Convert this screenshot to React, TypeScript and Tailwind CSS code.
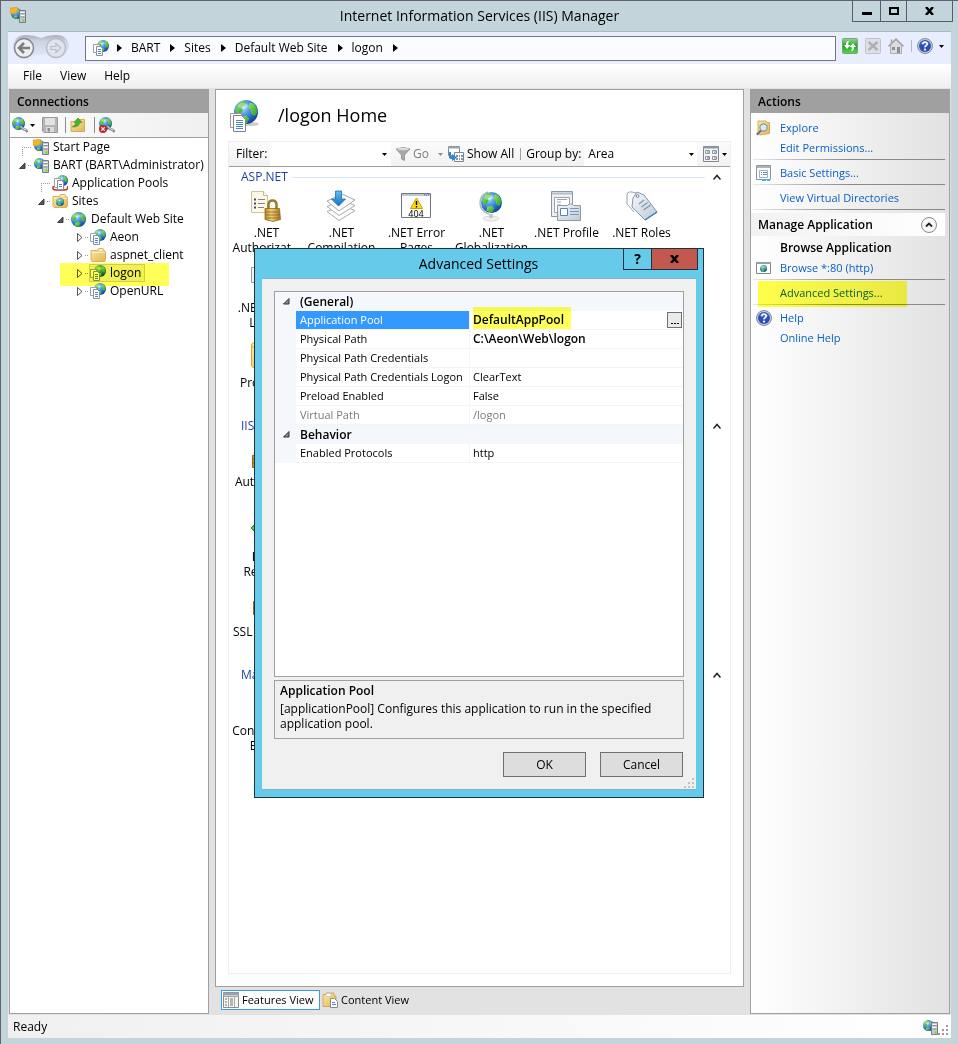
import type { ReactNode } from "react"

/* ---------- shared drawing parts ---------- */

function Defs() {
  return (
    <svg className="absolute h-0 w-0" aria-hidden="true">
      <defs>
        <radialGradient id="sea" cx="0.35" cy="0.3" r="0.75">
          <stop offset="0" stopColor="#d4effd" />
          <stop offset="0.35" stopColor="#5aa5ea" />
          <stop offset="0.75" stopColor="#2260c4" />
          <stop offset="1" stopColor="#163f96" />
        </radialGradient>
        <linearGradient id="land" x1="0" y1="0" x2="1" y2="1">
          <stop offset="0" stopColor="#9be866" />
          <stop offset="1" stopColor="#1f9a2e" />
        </linearGradient>
        <linearGradient id="gold" x1="0" y1="0" x2="1" y2="1">
          <stop offset="0" stopColor="#fbe9a9" />
          <stop offset="1" stopColor="#e2b550" />
        </linearGradient>
        <linearGradient id="brass" x1="0" y1="0" x2="1" y2="0">
          <stop offset="0" stopColor="#b98a2c" />
          <stop offset="0.4" stopColor="#f0d27a" />
          <stop offset="1" stopColor="#a47420" />
        </linearGradient>
        <linearGradient id="arrow" x1="0" y1="0" x2="0" y2="1">
          <stop offset="0" stopColor="#5fbdf0" />
          <stop offset="1" stopColor="#1673c4" />
        </linearGradient>
        <linearGradient id="leaf" x1="0" y1="0" x2="0" y2="1">
          <stop offset="0" stopColor="#8fdc8a" />
          <stop offset="0.5" stopColor="#22a028" />
          <stop offset="1" stopColor="#4fe23f" />
        </linearGradient>
        <linearGradient id="steel" x1="0" y1="0" x2="1" y2="1">
          <stop offset="0" stopColor="#f4f8fb" />
          <stop offset="1" stopColor="#bccbd8" />
        </linearGradient>
        <linearGradient id="pod" x1="0" y1="0" x2="0" y2="1">
          <stop offset="0" stopColor="#a9afbc" />
          <stop offset="0.25" stopColor="#ccd3e2" />
          <stop offset="1" stopColor="#e6ecfa" />
        </linearGradient>
      </defs>
    </svg>
  )
}

function Globe({ x, y, size }: { x: number; y: number; size: number }) {
  return (
    <g transform={`translate(${x} ${y}) scale(${size / 16})`}>
      <circle cx="8" cy="8" r="8" fill="url(#sea)" />
      <path d="M0.8 6.2Q2.2 1.8 6.6.5L8.4 1.4 7.2 3.4 5.4 4.8 5.8 7 4 9.6 2.2 9.8Z" fill="url(#land)" />
      <path d="M9.2 4.6L10.8 1.8 13 2.4Q15.6 5 15.7 8.4L13.8 10.8 11.6 9.4 11 6.6Z" fill="url(#land)" />
      <path d="M4.8 11.2L8.2 10.4 10.2 12.4 8.6 15.6Q6 15.6 4 14Z" fill="url(#land)" />
      <ellipse cx="6" cy="4" rx="3.4" ry="2" fill="#fff" opacity="0.35" />
    </g>
  )
}

function Icon({ size = 16, box = 16, children }: { size?: number; box?: number; children: ReactNode }) {
  return (
    <svg width={size} height={size} viewBox={`0 0 ${box} ${box}`} className="shrink-0" aria-hidden="true">
      {children}
    </svg>
  )
}

function AppIcon() {
  return (
    <Icon>
      <Globe x={4} y={0} size={12} />
      <path d="M0.5 4.5h5l1 1v7h-6z" fill="#fff" stroke="#9a9fa8" />
      <path d="M3.5 6.5h4l2 2v7h-6z" fill="#fff" stroke="#8a8f98" />
      <path d="M5 9.5h3M5 11.5h3M5 13.5h3" stroke="#4d83c4" />
    </Icon>
  )
}

function ServerIcon({ star = false }: { star?: boolean }) {
  return (
    <Icon>
      <Globe x={1} y={1} size={11} />
      {star && <path d="M0 1h3l2-1 3 1-1 4-4 2-3-1z" fill="#f7b52a" stroke="#d98a12" strokeWidth="0.6" />}
      <path d="M9.5 3.5h6v12h-6z" fill="#c5cbd0" stroke="#767c84" />
      <path d="M10.5 5.5h4M10.5 8.500h4" stroke="#fff" />
      <path d="M10.5 6.5h4M10.5 10h4" stroke="#7b8188" strokeWidth="0.8" />
      <circle cx="13.4" cy="13.4" r="1.2" fill="#7fdc00" />
    </Icon>
  )
}

function PoolsIcon() {
  return (
    <Icon>
      <path d="M1.500 11q-2 4 3 4h8q4 0 3-4" fill="none" stroke="#c62f26" strokeWidth="1.500" />
      <Globe x={5} y={0} size={11} />
      <path d="M2.500 3.500h6v9h-6z" fill="#fff" stroke="#9a9fa8" />
      <path d="M5.500 5.500h4l2 2v7h-6z" fill="#fff" stroke="#8a8f98" />
      <path d="M7 9.500h3M7 11.500h3" stroke="#4d83c4" />
    </Icon>
  )
}

function FolderIcon({ site = false }: { site?: boolean }) {
  return (
    <Icon>
      <path d="M1 3.500V13l1 1.500h12.500l1-1.500V4.500L14.500 3.500H14L13 1.500H8.500L7.500 3.500Z" fill="url(#gold)" stroke="#d3a448" strokeWidth="0.800" />
      <path d="M9 3h4" stroke="#fff" />
      <path d="M2 5.500H15" stroke="#fff5cf" strokeWidth="0.800" />
      {site && <Globe x={4} y={5} size={8} />}
    </Icon>
  )
}

function ConnectIcon({ broken = false }: { broken?: boolean }) {
  return (
    <Icon>
      <Globe x={0} y={0} size={13} />
      <path d="M8 9l3 3 3 1 1.500 2" fill="none" stroke="#7d858f" strokeWidth="2.400" />
      <path d="M8.500 9l3 3 3 1" fill="none" stroke="#e8ebee" strokeWidth="1" />
      {broken && (
        <>
          <circle cx="4" cy="12" r="4" fill="#c3272b" />
          <path d="M2.400 10.400l3.200 3.200M5.600 10.400l-3.200 3.200" stroke="#fff" strokeWidth="1.300" />
        </>
      )}
    </Icon>
  )
}

function SaveIcon() {
  return (
    <Icon>
      <path d="M0.500 0.500h15v15h-13.500l-1.500-1.500z" fill="#b5b5b5" stroke="#9a9a9a" />
      <path d="M3 1h10v7H3z" fill="#e2e2e2" />
      <path d="M4 10h8v5H4z" fill="#dcdcdc" />
      <path d="M5.500 11h2.500v3.500H5.500z" fill="#8c8c8c" />
    </Icon>
  )
}

function UpFolderIcon() {
  return (
    <Icon>
      <path d="M1 4.500h6l1-2h6.500v12H1z" fill="url(#gold)" stroke="#cda042" strokeWidth="0.800" />
      <path d="M2.500 9.500q3.500-1 3.500-4H4L8 1l4 4.500H9.500q0 4.500-7 4.500z" fill="#48b52c" stroke="#2c8a1a" strokeWidth="0.600" />
    </Icon>
  )
}

function HelpIcon() {
  return (
    <Icon>
      <circle cx="8" cy="8" r="7.500" fill="#c9ced6" stroke="#858c99" />
      <circle cx="8" cy="8" r="6" fill="#2b50b4" />
      <path d="M3 6q5-5 10 0-5 1-10 0z" fill="#7f9de2" opacity="0.600" />
      <path d="M5.800 6.200q0-2.200 2.200-2.200t2.200 2q0 1-1.200 1.700T8 9.400" fill="none" stroke="#fff" strokeWidth="1.600" />
      <circle cx="8" cy="11.600" r="1.100" fill="#fff" />
    </Icon>
  )
}

function Caret({ className = "text-black" }: { className?: string }) {
  return (
    <svg width="5" height="3" viewBox="0 0 5 3" className={`shrink-0 ${className}`} aria-hidden="true">
      <path d="M0 0h5L2.500 3z" fill="currentColor" />
    </svg>
  )
}

function Crumb() {
  return (
    <svg width="5" height="8" viewBox="0 0 5 8" className="shrink-0" aria-hidden="true">
      <path d="M0 0l5 4-5 4z" />
    </svg>
  )
}

function Grip({ color }: { color: string }) {
  return (
    <svg width="10" height="10" viewBox="0 0 10 10" className="shrink-0" fill={color} aria-hidden="true">
      <path d="M8 0h2v2H8zM4 4h2v2H4zM8 4h2v2H8zM0 8h2v2H0zM4 8h2v2H4zM8 8h2v2H8z" />
    </svg>
  )
}

/* ---------- feature icons, 32px ---------- */

function Padlock() {
  return (
    <g>
      <path d="M17.500 20v-5q0-4.500 4-4.500t4 4.500v5" fill="none" stroke="#9b7a34" strokeWidth="2.600" />
      <path d="M14 18.500h14.500l1 11-7.500 2-8-2z" fill="url(#brass)" stroke="#93681a" strokeWidth="0.800" />
      <path d="M14.500 22h14M14.500 25h14M14.500 28h14" stroke="#8f671d" strokeWidth="0.800" />
    </g>
  )
}

const featureIcons: Record<string, ReactNode> = {
  authorization: (
    <>
      <path d="M0.500 1.500h12l4 4v17h-16z" fill="#fbf8e4" stroke="#cdc5a2" />
      <path d="M12.500 1.500v4h4" fill="#fff" stroke="#c2b88c" />
      <path d="M7 9.500h7M7 13.500h7M7 17.500h6" stroke="#857e98" />
      <path d="M3 8.500h2v2H3zM3 12.500h2v2H3zM3 16.500h2v2H3z" fill="#4b4560" />
      <Padlock />
    </>
  ),
  compilation: (
    <>
      <path d="M1 21.500l15-6 13 5-16 10z" fill="#fff" stroke="#a7a9ac" />
      <path d="M1 16.500l15-6 13 5-16 10z" fill="#fff" stroke="#a7a9ac" />
      <path d="M1 11l15-7 13 6-16 11z" fill="#fafafa" stroke="#a7a9ac" />
      <path d="M9.500 1h6v8h4l-7 7-7-7h4z" fill="url(#arrow)" stroke="#1e6fae" strokeWidth="0.800" />
    </>
  ),
  error: (
    <>
      <path d="M0.500 3.500h29v24h-29z" fill="#fcfcfc" stroke="#6f7680" />
      <path d="M1 4h28v2H1z" fill="#bac7d8" />
      <path d="M23 5h1M25 5h1M27 5h1" stroke="#3d5a80" />
      <path d="M15.500 8l6 10.500h-12z" fill="#ffd91c" stroke="#d09c00" strokeLinejoin="round" />
      <path d="M15.500 11v4M15.500 16v1.500" stroke="#000" strokeWidth="1.400" />
      <text x="15" y="27" fontSize="9" textAnchor="middle" fill="#000">404</text>
    </>
  ),
  globalization: (
    <>
      <ellipse cx="15" cy="28.500" rx="8" ry="2.500" fill="#f0f0f0" stroke="#c4c4c4" strokeWidth="0.600" />
      <path d="M13 24h4v4h-4z" fill="#c8c8c8" />
      <path d="M12 2Q4 5 4 13t9 11" fill="none" stroke="#b3b7bb" strokeWidth="1.500" />
      <Globe x={5} y={2} size={21} />
    </>
  ),
  profile: (
    <>
      <path d="M0.500 1.500h21v25h-21z" fill="#edf1f4" stroke="#8d959d" />
      <path d="M1 3.500h20" stroke="#b5bdc5" strokeWidth="2" />
      <path d="M3.500 7.500h15v15h-15zM6 9.500h10M6 12h4M6 15h4" fill="#fff" stroke="#9aa3ac" />
      <path d="M6.500 15.500h10l1.500-1.500h3l1.500 1.500h7v15h-23z" fill="url(#steel)" stroke="#8d99a6" />
      <path d="M9.500 18.500h7v7h-7z" fill="#fff" stroke="#5c81b0" />
      <path d="M19 18.500h9M19 21.500h9M19 24.500h9" stroke="#7d97b5" />
    </>
  ),
  roles: (
    <>
      <path d="M10 3Q1 0 1 5v9l7 8" fill="none" stroke="#9aa3ab" />
      <path d="M7 8l4-6 7 3 13 17-12 8L6 17z" fill="url(#steel)" stroke="#8195a6" />
      <circle cx="11.500" cy="6" r="1.400" fill="#fff" stroke="#75818c" />
      <path d="M13 14l5-4M15.500 17l6-4.500M17.500 20l7-5" stroke="#8192b0" strokeWidth="1.200" />
      <path d="M31 22l-12 8" stroke="#3c7eb5" strokeWidth="1.500" />
    </>
  ),
  trust: (
    <path d="M0.500 2.500h19v15h-19zM4 5h14v15H4z" fill="#f3f3f3" stroke="#9a9a9a" />
  ),
  providers: (
    <>
      <path d="M0.500 5v20q0 4 11 4t11-4V5z" fill="url(#gold)" stroke="#e0a52c" />
      <ellipse cx="11.500" cy="5" rx="11" ry="4" fill="#ffe9a6" stroke="#e0a52c" />
    </>
  ),
  authentication: (
    <>
      <path d="M4 17v-3q0-4 4-4t4 4v3" fill="none" stroke="#9b7a34" strokeWidth="2.400" />
      <path d="M1.500 16.500h14v12h-14z" fill="url(#brass)" stroke="#93681a" />
      <path d="M1 20h15M1 24h15" stroke="#8f671d" />
    </>
  ),
  redirect: <path d="M0 14l10-10v6h18v8h-18v6z" fill="#58c43b" stroke="#2f8a1e" />,
  ssl: (
    <>
      <path d="M2.500 12.500h20v13h-20z" fill="url(#brass)" stroke="#93681a" />
      <path d="M3 16h20M3 20h20" stroke="#8f671d" />
    </>
  ),
  editor: <path d="M8.500 2.500h18v26h-18zM12 8h10M12 12h10" fill="#fff" stroke="#8d959d" />,
}

/* ---------- title, address and menu bars ---------- */

function TitleBar() {
  return (
    <header className="flex h-[30px] items-start">
      <div className="flex w-[99px] pl-0.5 pt-[6px]">
        <ServerIcon star />
      </div>
      <h1 className="flex-1 pt-1 text-center text-[14px] leading-[22px]">
        Internet Information Services (IIS) Manager
      </h1>
      <div className="-mr-0.5 flex h-[21px] border border-t-0 border-[#5b5a6b]">
        <button aria-label="Minimize" className="flex w-[27px] items-center justify-center">
          <svg width="10" height="3" className="mt-1"><path d="M0 0h10v3H0z" /></svg>
        </button>
        <button aria-label="Maximize" className="flex w-[27px] items-center justify-center border-x border-[#5b5a6b]">
          <svg width="10" height="8" fill="none" stroke="#000" strokeWidth="2"><path d="M1 1h8v6H1z" /></svg>
        </button>
        <button aria-label="Close" className="flex w-[45px] items-center justify-center">
          <svg width="9" height="8" stroke="#000" strokeWidth="2.500"><path d="M1 0l7 8M8 0L1 8" /></svg>
        </button>
      </div>
    </header>
  )
}

function AddressBar() {
  return (
    <nav className="flex h-[33px] items-center border-t border-[#a9b9c4] bg-[#e8eefd] pr-[7px]" aria-label="Address">
      <svg width="58" height="28" viewBox="0 0 58 28" className="ml-1 shrink-0" aria-hidden="true">
        <path d="M1 13Q2 1 14 1q8 0 15 3 7-3 15-3 12 0 13 12-4 12-13 12-6 0-9-4h-12q-3 5-9 5Q3 26 1 13z" fill="url(#pod)" />
        <circle cx="12" cy="14" r="9.500" fill="#eceef2" stroke="#868686" strokeWidth="1.500" />
        <path d="M18 14H8M12 9l-5 5 5 5" fill="none" stroke="#7c7c7c" strokeWidth="2.600" />
        <circle cx="44" cy="14" r="9.500" fill="#dfe4ef" stroke="#b7bcc7" strokeWidth="1.500" />
        <path d="M39 12.500h5v-3l5 4.500-5 4.500v-3h-5z" fill="none" stroke="#b7bcc7" strokeWidth="1.200" />
      </svg>
      <div className="ml-[15px] flex h-[25px] flex-1 items-center border border-[#75777d] bg-[#fafcff] pl-[7px]">
        <AppIcon />
        <ol className="ml-2 flex items-center gap-[10px]">
          {["BART", "Sites", "Default Web Site", "logon"].map((name) => (
            <li key={name} className="flex items-center gap-[9px]">
              <Crumb />
              <a href="#">{name}</a>
            </li>
          ))}
          <li><Crumb /></li>
        </ol>
      </div>
      <div className="mb-1 ml-[6px] flex items-center gap-[7px]">
        <button aria-label="Refresh">
          <Icon>
            <rect x="0.500" y="0.500" width="15" height="15" rx="1" fill="url(#leaf)" stroke="#8a9a8a" />
            <path d="M7 3Q3.500 3 4 7H2l3 4 3.500-4H6.500Q5.500 5 7 3zM9 13q3.500 0 3-4h2l-3-4-3.500 4h2q1 2-.5 4z" fill="#fff" />
          </Icon>
        </button>
        <button aria-label="Stop">
          <Icon>
            <rect x="0.500" y="0.500" width="15" height="15" rx="1" fill="#dcdfe5" stroke="#c0c3c9" />
            <path d="M3.500 4l9 8M12.500 4l-9 8" stroke="#adafb4" strokeWidth="2.400" />
          </Icon>
        </button>
        <button aria-label="Home">
          <Icon>
            <path d="M2.500 7v8.500h11V7L8 2z" fill="#dcdcdc" stroke="#b0b0b0" />
            <path d="M0.500 8.500L8 1l7.500 7.500M3.500 5V1.500" fill="none" stroke="#a9a9a9" strokeWidth="1.600" />
            <path d="M9 9h3v6H9zM4 9h3v3H4z" fill="#8f8f8f" />
          </Icon>
        </button>
        <span className="h-3 w-px bg-[#b4b8c2]" />
        <button aria-label="Help" className="-ml-0.5 flex items-center gap-[6px]">
          <HelpIcon />
          <Caret />
        </button>
      </div>
    </nav>
  )
}

function MenuBar() {
  return (
    <div className="flex h-6 items-center gap-[18px] bg-linear-to-b from-white to-[#efefef] px-[15px]">
      <button>File</button>
      <button>View</button>
      <button>Help</button>
    </div>
  )
}

/* ---------- connections tree ---------- */

type Node = {
  label: string
  indent: string
  state: "open" | "closed" | "leaf"
  icon: ReactNode
  selected?: boolean
}

const nodes: Node[] = [
  { label: "Start Page", indent: "pl-[9px]", state: "leaf", icon: <ServerIcon star /> },
  { label: "BART (BART\\Administrator)", indent: "pl-[9px]", state: "open", icon: <ServerIcon /> },
  { label: "Application Pools", indent: "pl-[28px]", state: "leaf", icon: <PoolsIcon /> },
  { label: "Sites", indent: "pl-[28px]", state: "open", icon: <FolderIcon site /> },
  { label: "Default Web Site", indent: "pl-[47px]", state: "open", icon: <Icon><Globe x={0} y={1} size={15} /></Icon> },
  { label: "Aeon", indent: "pl-[66px]", state: "closed", icon: <AppIcon /> },
  { label: "aspnet_client", indent: "pl-[66px]", state: "closed", icon: <FolderIcon /> },
  { label: "logon", indent: "pl-[66px]", state: "closed", icon: <AppIcon />, selected: true },
  { label: "OpenURL", indent: "pl-[66px]", state: "closed", icon: <AppIcon /> },
]

function Twisty({ state }: { state: Node["state"] }) {
  return (
    <svg width="13" height="18" viewBox="0 0 13 18" className="shrink-0" aria-hidden="true">
      {state === "open" && <path d="M6 7v5.500H0.500z" fill="#595959" stroke="#262626" strokeWidth="0.800" />}
      {state === "closed" && <path d="M1.500 5.500l4.500 4-4.500 4z" fill="#fff" stroke="#555" />}
      <path d={state === "leaf" ? "M3 9.500h10" : "M9 9.500h4"} stroke="#9a9a9a" strokeDasharray="1 1" />
      {state === "leaf" && <path d="M3.500 9v9" stroke="#9a9a9a" strokeDasharray="1 1" />}
    </svg>
  )
}

function Connections() {
  return (
    <aside className="flex w-[200px] shrink-0 flex-col border border-t-0 border-[#a0a0a0] bg-white">
      <h2 className="h-6 bg-[#a0a0a0] pl-[7px] font-semibold leading-[25px]">Connections</h2>
      <div className="flex h-[25px] items-center border-b border-[#a0a0a0] bg-linear-to-r from-[#fcfcfc] to-[#f0f0f0] pl-0.5">
        <button aria-label="Create connection" className="flex items-center gap-0.5">
          <ConnectIcon />
          <Caret />
        </button>
        <button aria-label="Save" className="ml-[7px]"><SaveIcon /></button>
        <span className="ml-[7px] h-4 w-px bg-[#8c8c8c]" />
        <button aria-label="Up" className="ml-1"><UpFolderIcon /></button>
        <span className="ml-2 h-4 w-px bg-[#8c8c8c]" />
        <button aria-label="Delete connection" className="ml-1"><ConnectIcon broken /></button>
      </div>
      <ul>
        {nodes.map((node) => (
          <li key={node.label} className={`relative flex h-[18px] items-center whitespace-nowrap ${node.indent}`}>
            <Twisty state={node.state} />
            <span className={`flex h-[18px] items-center gap-1 pl-px pr-1 ${node.selected ? "bg-[#f0f0f0] outline outline-[#d0d0d0] -outline-offset-1" : ""}`}>
              {node.icon}
              {node.label}
            </span>
            {node.selected && (
              <mark className="absolute left-[50px] top-[-1px] h-[23px] w-[109px] bg-[#ffff57] mix-blend-multiply" />
            )}
          </li>
        ))}
      </ul>
    </aside>
  )
}

/* ---------- features view ---------- */

type Feature = { icon: string; label: string }

const groups: { title: string; rows: Feature[][] }[] = [
  {
    title: "ASP.NET",
    rows: [
      [
        { icon: "authorization", label: ".NET\nAuthorizat..." },
        { icon: "compilation", label: ".NET\nCompilation" },
        { icon: "error", label: ".NET Error\nPages" },
        { icon: "globalization", label: ".NET\nGlobalization" },
        { icon: "profile", label: ".NET Profile" },
        { icon: "roles", label: ".NET Roles" },
      ],
      [{ icon: "trust", label: ".NET Trust\nLevels" }],
      [{ icon: "providers", label: "Providers" }],
    ],
  },
  {
    title: "IIS",
    rows: [
      [{ icon: "authentication", label: "Authentic..." }],
      [{ icon: "redirect", label: "HTTP\nRedirect" }],
      [{ icon: "ssl", label: "SSL Settings" }],
    ],
  },
  {
    title: "Management",
    rows: [[{ icon: "editor", label: "Configurat...\nEditor" }]],
  },
]

function FilterBar() {
  return (
    <div className="flex h-[25px] items-center whitespace-nowrap border-b border-[#a0a0a0] bg-linear-to-b from-[#fbfbfb] to-[#f2f2f2]">
      <label htmlFor="filter" className="w-[41px] pl-[7px]">Filter:</label>
      <div className="flex h-6 w-[121px] items-center bg-white pr-1">
        <input id="filter" type="text" className="w-full min-w-0 outline-none" />
        <Caret />
      </div>
      <button className="ml-1 flex items-center gap-0.5 text-[#7d7d7d]">
        <Icon>
          <path d="M1 3q7-3 14 0l-5.500 6v5.500L6.500 13V9z" fill="#a9a9a9" stroke="#8f8f8f" strokeWidth="0.800" />
          <ellipse cx="8" cy="3" rx="6" ry="1.200" fill="#dedede" />
        </Icon>
        Go
      </button>
      <Caret className="ml-[9px] text-[#8f8f8f]" />
      <button className="ml-[5px] flex items-center gap-[3px]">
        <Icon>
          <path d="M0.500 0.500h11v9h-11z" fill="#fff" stroke="#7d8794" />
          <path d="M0 1.500h12" stroke="#9aa4b0" strokeWidth="2" />
          <path d="M6.500 6.500h9v9h-9z" fill="#fff" stroke="#7d8794" />
          <path d="M8 10h2M11 10h1M13 10h2M8 13h2M11 13h1M13 13h2" stroke="#5c6f90" strokeWidth="1.500" />
          <path d="M1 6v5q0 2 3 2v2l5-3.500L4 8v2.500Q3 10.500 3 9V6z" fill="#2f86d0" />
        </Icon>
        Show All
      </button>
      <span className="ml-[6px] h-3 w-px bg-[#a0a0a0]" />
      <label htmlFor="group" className="ml-[5px]">Group by:</label>
      <div className="ml-[3px] flex h-6 flex-1 items-center bg-white pr-[3px]">
        <select id="group" className="w-full min-w-0 appearance-none pl-1 outline-none">
          <option>Area</option>
        </select>
        <Caret />
      </div>
      <button aria-label="View style" className="ml-[6px] mr-[3px] flex items-center gap-[3px]">
        <Icon>
          <path d="M0.500 0.500h15v15h-15z" fill="#f4f6f8" stroke="#7d8590" />
          <path d="M0 1.500h16" stroke="#8c98a8" strokeWidth="2" />
          <path d="M2.500 4.500h4v3h-4zM9.500 4.500h4v3h-4zM2.500 10.500h4v3h-4zM9.500 10.500h4v3h-4z" fill="#fff" stroke="#8b93a0" />
          <path d="M4 6h2" stroke="#41a040" />
          <path d="M11 6h2" stroke="#3c8ac4" />
          <path d="M4 12h2" stroke="#6b3cb0" />
          <path d="M11 12h2" stroke="#d1622f" />
        </Icon>
        <Caret />
      </button>
    </div>
  )
}

function Features() {
  return (
    <main className="flex min-w-0 flex-1 flex-col">
      <section className="flex flex-1 flex-col border border-[#a0a0a0] bg-white px-3 pb-3">
        <div className="flex h-[51px] items-center pl-0.5">
          <Icon size={32} box={32}>
            <ellipse cx="20" cy="24" rx="9" ry="2" fill="#000" opacity="0.200" />
            <Globe x={4} y={0} size={24} />
            <path d="M0.500 13.500h11v14h-11z" fill="#fbfbfb" stroke="#9a9a9a" />
            <path d="M3.500 15.500h8l4 4v12h-12z" fill="#fff" stroke="#858585" />
            <path d="M6 20.500h7M6 22.500h7M6 24.500h7M6 26.500h7M6 28.500h7" stroke="#4b86cd" />
          </Icon>
          <h2 className="ml-4 pb-0.5 text-lg">/logon Home</h2>
        </div>
        <div className="flex-1 border border-[#efefef]">
          <FilterBar />
          {groups.map((group) => (
            <section key={group.title} className="mb-px">
              <div className="mb-[3px] flex h-5 items-center pl-3 pr-[9px]">
                <h3 className="text-[#1f3f9f]">{group.title}</h3>
                <span className="ml-1 h-px flex-1 bg-[#d9e7f6]" />
                <button aria-label="Collapse group" className="ml-2">
                  <svg width="8" height="6" fill="none" stroke="#222" strokeWidth="1.500"><path d="M0.500 5.500L4 1.500l3.500 4" /></svg>
                </button>
              </div>
              {group.rows.map((row, i) => (
                <div key={i} className="flex h-[75px]">
                  {row.map((f) => (
                    <a href="#" key={f.label} className="flex w-[75px] flex-col items-center gap-[3px]">
                      <Icon size={32} box={32}>{featureIcons[f.icon]}</Icon>
                      <span className="whitespace-pre text-center leading-[15px]">{f.label}</span>
                    </a>
                  ))}
                </div>
              ))}
            </section>
          ))}
        </div>
      </section>
      <div className="flex h-[27px] items-center pb-px pl-[6px] text-[11px]">
        <button className="flex h-5 w-[99px] items-center gap-[3px] whitespace-nowrap border border-[#3399ff] bg-white pl-px">
          <Icon>
            <path d="M0.500 0.500h15v15h-15z" fill="#f5f5f5" stroke="#8b8b8b" />
            <path d="M0 2h16" stroke="#9aa3ad" strokeWidth="3" />
            <path d="M5.500 4v11M11.500 4v11M0.500 4.500h15" stroke="#a8a8a8" />
            <path d="M2 7h2M2 10h2M2 13h2M7 7h3M7 9h3M7 11h3M7 13h3" stroke="#6c7b5c" />
          </Icon>
          Features View
        </button>
        <button className="ml-0.5 flex items-center gap-[3px] whitespace-nowrap">
          <Icon>
            <path d="M1 2.500h3V1h8v3h2v9l-2 1.500H1z" fill="url(#gold)" stroke="#c89e44" strokeWidth="0.800" />
            <path d="M4 1.500h5v3H4z" fill="#fff" stroke="#b5b5b5" strokeWidth="0.600" />
            <path d="M8.500 6.500h4l3 3v6h-7z" fill="#fff" stroke="#8a8a8a" />
            <path d="M10 10.500h3M10 12.500h4" stroke="#4b86cd" />
          </Icon>
          Content View
        </button>
      </div>
    </main>
  )
}

/* ---------- actions ---------- */

function Action({ icon, children }: { icon?: ReactNode; children: ReactNode }) {
  return (
    <a href="#" className="flex h-5 items-center gap-2 pl-[5px] text-[11px] text-[#0a5fc4]">
      <span className="w-4">{icon}</span>
      {children}
    </a>
  )
}

function Divider() {
  return (
    <div className="ml-[2px] mr-1 h-[5px] pt-px">
      <div className="h-px bg-linear-to-r from-[#e8e8e8] to-[#8a8a8a] to-50%" />
    </div>
  )
}

function Actions() {
  return (
    <aside className="flex w-[200px] shrink-0 flex-col border border-t-0 border-[#a0a0a0] bg-linear-to-r from-white to-[#e2e2e2]">
      <h2 className="mb-[5px] h-6 bg-[#a0a0a0] pl-[7px] font-semibold leading-[25px]">Actions</h2>
      <Action
        icon={
          <Icon>
            <path d="M2 1h8l1 1.500h2.500v11L4 15l-2-1z" fill="url(#gold)" stroke="#cfa040" strokeWidth="0.800" />
            <circle cx="7.500" cy="7.500" r="3.600" fill="#d7ecf8" stroke="#8796a3" strokeWidth="1.200" />
            <path d="M5 10.500L0.800 14.800" stroke="#6d747c" strokeWidth="2" />
          </Icon>
        }
      >
        Explore
      </Action>
      <Action>Edit Permissions...</Action>
      <Divider />
      <Action
        icon={
          <Icon>
            <path d="M0.500 0.500h14v14h-14z" fill="#fafbfc" stroke="#8b95a1" />
            <path d="M1 2h13" stroke="#aab4c0" strokeWidth="2" />
            <path d="M3.500 5.500h8v7h-8z" fill="#fff" stroke="#9fb0c0" />
            <path d="M5 7.500h1M7 7.500h4M5 9.500h1M7 9.500h4" stroke="#6a88a8" />
            <path d="M6 15h4M11 15h3" stroke="#36b5ee" strokeWidth="2" />
          </Icon>
        }
      >
        Basic Settings...
      </Action>
      <Divider />
      <Action>View Virtual Directories</Action>
      <Divider />
      <div className="mb-0.5 mr-1 flex h-[23px] items-center justify-between bg-linear-to-r from-[#f2f2f2] to-white pl-[7px] pr-2">
        <h3 className="font-semibold">Manage Application</h3>
        <button aria-label="Collapse">
          <Icon>
            <circle cx="8" cy="8" r="7.500" fill="#f7f7f7" stroke="#8a8a8a" />
            <path d="M5 9.500L8 6.500l3 3" fill="none" stroke="#222" strokeWidth="1.800" />
          </Icon>
        </button>
      </div>
      <h4 className="h-5 pl-[29px] font-semibold leading-5">Browse Application</h4>
      <Action
        icon={
          <Icon>
            <path d="M0.500 2.500h14v11h-14z" fill="#fff" stroke="#7f8893" />
            <path d="M0 3h15" stroke="#8fa0b5" strokeWidth="2" />
            <Globe x={4} y={5} size={7} />
          </Icon>
        }
      >
        Browse *:80 (http)
      </Action>
      <Divider />
      <div className="relative">
        <Action>Advanced Settings...</Action>
        <mark className="absolute left-[7px] top-[-2px] h-[26px] w-[149px] bg-[#ffff4a] mix-blend-multiply" />
      </div>
      <Divider />
      <Action icon={<HelpIcon />}>Help</Action>
      <Action>Online Help</Action>
    </aside>
  )
}

/* ---------- advanced settings dialog ---------- */

const settings = [
  {
    category: "(General)",
    items: [
      { name: "Application Pool", value: "DefaultAppPool", kind: "active" },
      { name: "Physical Path", value: "C:\\Aeon\\Web\\logon", kind: "changed" },
      { name: "Physical Path Credentials", value: "", kind: "plain" },
      { name: "Physical Path Credentials Logon", value: "ClearText", kind: "plain" },
      { name: "Preload Enabled", value: "False", kind: "plain" },
      { name: "Virtual Path", value: "/logon", kind: "readonly" },
    ],
  },
  {
    category: "Behavior",
    items: [{ name: "Enabled Protocols", value: "http", kind: "plain" }],
  },
]

function PropertyGrid() {
  return (
    <div className="h-[386px] border border-[#a0a0a0] bg-white">
      <table className="w-full table-fixed border-separate border-spacing-0">
        <colgroup>
          <col className="w-[21px]" />
          <col className="w-[174px]" />
          <col />
        </colgroup>
        {settings.map((group) => (
          <tbody key={group.category}>
            <tr className="h-[19px] bg-[#f4f7fc]">
              <td className="p-0">
                <svg width="7" height="7" className="ml-2"><path d="M6 0.500V6H0.500z" fill="#8a8a8a" stroke="#333" /></svg>
              </td>
              <th colSpan={2} scope="rowgroup" className="p-0 pl-1 text-left font-semibold leading-[19px]">
                {group.category}
              </th>
            </tr>
            {group.items.map((item) => (
              <tr key={item.name} className={`h-[19px] ${item.kind === "readonly" ? "text-[#7a7a7a]" : ""}`}>
                <td className="bg-[#f4f7fc] p-0" />
                <th
                  scope="row"
                  className={`whitespace-nowrap border-b border-r border-[#f0f4fb] p-0 pl-1 text-left text-[11px] font-normal leading-[18px] ${item.kind === "active" ? "bg-[#3399ff] text-white" : ""}`}
                >
                  {item.name}
                </th>
                <td
                  className={`relative border-b border-[#f0f4fb] p-0 pl-[3px] leading-[18px] ${item.kind === "active" || item.kind === "changed" ? "font-semibold" : "text-[11px]"}`}
                >
                  {item.value}
                  {item.kind === "active" && (
                    <>
                      <mark className="absolute bottom-0 left-[3px] h-[22px] w-[98px] bg-[#ffff57] mix-blend-multiply" />
                      <button
                        aria-label="Browse"
                        className="absolute right-px top-px flex h-4 w-[15px] items-end justify-center border border-[#707070] bg-[#eaeaea] pb-[3px]"
                      >
                        <svg width="8" height="1"><path d="M0 0h2v1H0zM3 0h2v1H3zM6 0h2v1H6z" /></svg>
                      </button>
                    </>
                  )}
                </td>
              </tr>
            ))}
          </tbody>
        ))}
      </table>
    </div>
  )
}

function AdvancedSettings() {
  return (
    <div
      role="dialog"
      aria-labelledby="dialog-title"
      className="absolute inset-x-0 top-[248px] mx-auto w-[450px] border border-[#22323c] bg-[#66caea] px-[7px] pb-[7px]"
    >
      <div className="flex h-[29px] items-start">
        <span className="w-[72px]" />
        <h2 id="dialog-title" className="flex-1 pt-1 text-center text-[14px] leading-[22px]">Advanced Settings</h2>
        <div className="-mr-0.5 flex h-[21px] border border-t-0 border-[#22323c]">
          <button aria-label="Help" className="w-7 border-r border-[#22323c] text-[14px] font-bold leading-5">?</button>
          <button aria-label="Close" className="flex w-[45px] items-center justify-center bg-[#c1594f]">
            <svg width="9" height="8" stroke="#000" strokeWidth="2.500"><path d="M1 0l7 8M8 0L1 8" /></svg>
          </button>
        </div>
      </div>
      <div className="border-y border-[#7fb4c8] bg-[#f0f0f0]">
        <div className="px-3 pt-3">
          <PropertyGrid />
          <div className="mt-[3px] h-[59px] border border-[#a0a0a0] px-[5px] pt-0.5">
            <h3 className="font-semibold leading-4">Application Pool</h3>
            <p className="mt-0.5 leading-[15px]">
              [applicationPool] Configures this application to run in the specified application pool.
            </p>
          </div>
          <div className="mt-[13px] flex justify-end gap-[14px] pr-px">
            <button className="h-[25px] w-[83px] border border-[#707070] bg-[#dddddd]">OK</button>
            <button className="h-[25px] w-[83px] border border-[#707070] bg-[#dddddd]">Cancel</button>
          </div>
        </div>
        <div className="flex h-3 items-end justify-end pb-px pr-0.5">
          <Grip color="#c3c3c3" />
        </div>
      </div>
    </div>
  )
}

export default function App() {
  return (
    <div className="relative flex min-h-screen cursor-default font-['Open_Sans','Noto_Sans',sans-serif] text-[12px] leading-4 text-black">
      <Defs />
      <div className="flex min-w-0 flex-1 flex-col border-l border-t border-[#5f6170] bg-[#c3d5da] pb-[6px] pl-[7px] pr-[7px]">
        <TitleBar />
        <AddressBar />
        <MenuBar />
        <div className="flex flex-1 gap-[6px] bg-[#e2e2e2] p-px">
          <Connections />
          <Features />
          <Actions />
        </div>
        <footer className="flex h-[23px] items-center justify-between bg-linear-to-r from-[#f0f0f0] to-white pl-[5px] pr-[3px]">
          Ready
          <span className="flex items-end">
            <ServerIcon />
            <Grip color="#9a9a9a" />
          </span>
        </footer>
      </div>
      <AdvancedSettings />
    </div>
  )
}
